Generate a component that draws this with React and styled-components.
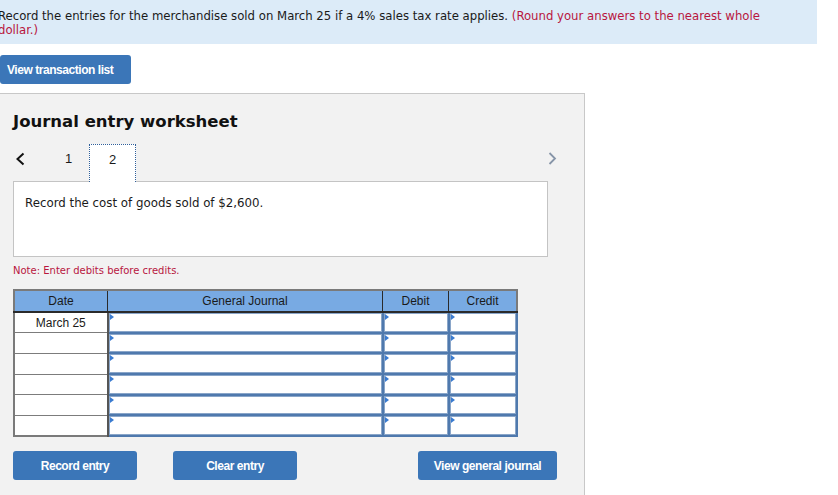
import React from 'react'
import styled, { createGlobalStyle } from 'styled-components'

const Global = createGlobalStyle`
  body {
    margin: 0;
    background: #fff;
    overflow: hidden;
  }
`

const Page = styled.div`
  margin-left: -10px;
  width: 860px;
`

const Banner = styled.div`
  width: 827px;
  box-sizing: border-box;
  background: #dcebf8;
  padding: 9px 20px 7px 8px;
  font-family: 'DejaVu Sans Condensed', 'DejaVu Sans', Verdana, sans-serif;
  font-size: 13px;
  line-height: 14px;
  color: #1a1a1a;

  span {
    color: #b8163e;
  }
`

const Button = styled.button`
  display: inline-flex;
  align-items: center;
  justify-content: ${({ left }) => (left ? 'flex-start' : 'center')};
  height: 29px;
  width: ${({ w }) => w}px;
  padding: 0 0 0 ${({ left }) => (left ? '7px' : '0')};
  border: none;
  border-radius: 3px;
  background: #3b76b8;
  color: #fff;
  font-family: 'Liberation Sans', Arial, sans-serif;
  font-weight: bold;
  font-size: 12px;
  letter-spacing: -0.45px;
  cursor: pointer;
`

const TopBar = styled.div`
  padding: 11px 0 9px 10px;
`

const Panel = styled.section`
  width: 595px;
  box-sizing: border-box;
  min-height: 420px;
  background: #f2f2f2;
  border-top: 1px solid #c8c8c8;
  border-right: 1px solid #c8c8c8;
  padding: 17px 0 0 23px;
`

const Title = styled.h3`
  margin: 0;
  font-family: 'DejaVu Sans', Verdana, sans-serif;
  font-size: 16.5px;
  font-weight: bold;
  color: #111;
  line-height: 22px;
`

const Tabs = styled.div`
  display: flex;
  align-items: stretch;
  width: 547px;
  height: 38px;
  margin-top: 11px;
  margin-bottom: -1px;
  font-family: 'Liberation Sans', Arial, sans-serif;
  font-size: 13px;
`

const Arrow = styled.div`
  display: flex;
  align-items: flex-start;
  width: ${({ w }) => w || 20}px;
  margin-left: ${({ right }) => (right ? 'auto' : '0')};
  padding: 8px 0 0 ${({ pad }) => pad || 0}px;
  box-sizing: border-box;
  svg {
    display: block;
  }
`

const Tab = styled.div`
  position: relative;
  z-index: 1;
  width: ${({ active }) => (active ? '47px' : '36px')};
  box-sizing: border-box;
  display: flex;
  align-items: flex-start;
  justify-content: center;
  padding-top: 7px;
  padding-right: ${({ active }) => (active ? '0' : '5px')};
  color: #1a1a1a;
  background: ${({ active }) => (active ? '#fff' : 'transparent')};
  border: ${({ active }) => (active ? '1px dotted #2f5f9a' : 'none')};
  border-bottom: none;
`

const Prompt = styled.div`
  width: 535px;
  height: 76px;
  box-sizing: border-box;
  background: #fff;
  border: 1px solid #c4c4c4;
  padding: 14px 11px;
  font-family: 'DejaVu Sans', Verdana, sans-serif;
  font-size: 11.8px;
  color: #1a1a1a;
`

const Note = styled.div`
  margin-top: 8px;
  font-family: 'DejaVu Sans', Verdana, sans-serif;
  font-size: 10px;
  color: #b8163e;
`

const Table = styled.table`
  margin-top: 13px;
  border-collapse: collapse;
  font-family: 'Liberation Sans', Arial, sans-serif;
  font-size: 12px;
  color: #1a1a1a;
  border: 2px solid #7a7a7a;
`

const Th = styled.th`
  width: ${({ w }) => w}px;
  height: 20px;
  padding: 0;
  background: #78aae3;
  font-weight: normal;
  border: 1px solid #2a2a2a;
  border-top: none;
  border-bottom: 2px solid #2a2a2a;
`

const DateCell = styled.td`
  height: 18.7px;
  padding: 0;
  text-align: center;
  background: #fff;
  border: 1px solid #7c7c7c;
  border-right: 2px solid #555;
`

const InputCell = styled.td`
  position: relative;
  height: 18.7px;
  padding: 0;
  background: #fff;
  border: 2px solid #4f79ad;
  box-shadow: inset 0 0 0 1px #8aa6c9;

  &::before {
    content: '';
    position: absolute;
    left: 1px;
    top: 1px;
    border-left: 4px solid #3a7bd0;
    border-top: 3px solid transparent;
    border-bottom: 3px solid transparent;
  }
`

const Actions = styled.div`
  display: flex;
  align-items: center;
  width: 544px;
  margin-top: 14px;
  gap: 36px;

  & > :last-child {
    margin-left: auto;
  }
`

const rows = ['March 25', '', '', '', '', '']

export default function App() {
  return (
    <Page>
      <Global />
      <Banner>
        Record the entries for the merchandise sold on March 25 if a 4% sales tax rate applies.{' '}
        <span>(Round your answers to the nearest whole<br />dollar.)</span>
      </Banner>

      <TopBar>
        <Button w={131} left>View transaction list</Button>
      </TopBar>

      <Panel>
        <Title>Journal entry worksheet</Title>

        <Tabs>
          <Arrow w={40} pad={2}>
            <svg width="10" height="14" viewBox="0 0 10 14">
              <path d="M8.5 1.5 L2.5 7 L8.5 12.5" fill="none" stroke="#111" strokeWidth="2" />
            </svg>
          </Arrow>
          <Tab>1</Tab>
          <Tab active>2</Tab>
          <Arrow right w={12}>
            <svg width="9" height="13" viewBox="0 0 9 13">
              <path d="M1.5 1 L7 6.5 L1.5 12" fill="none" stroke="#8795a8" strokeWidth="1.8" />
            </svg>
          </Arrow>
        </Tabs>

        <Prompt>Record the cost of goods sold of $2,600.</Prompt>

        <Note>Note: Enter debits before credits.</Note>

        <Table>
          <thead>
            <tr>
              <Th w={92}>Date</Th>
              <Th w={274}>General Journal</Th>
              <Th w={65}>Debit</Th>
              <Th w={67}>Credit</Th>
            </tr>
          </thead>
          <tbody>
            {rows.map((d, i) => (
              <tr key={i}>
                <DateCell>{d}</DateCell>
                <InputCell />
                <InputCell />
                <InputCell />
              </tr>
            ))}
          </tbody>
        </Table>

        <Actions>
          <Button w={124}>Record entry</Button>
          <Button w={124}>Clear entry</Button>
          <Button w={139}>View general journal</Button>
        </Actions>
      </Panel>
    </Page>
  )
}
